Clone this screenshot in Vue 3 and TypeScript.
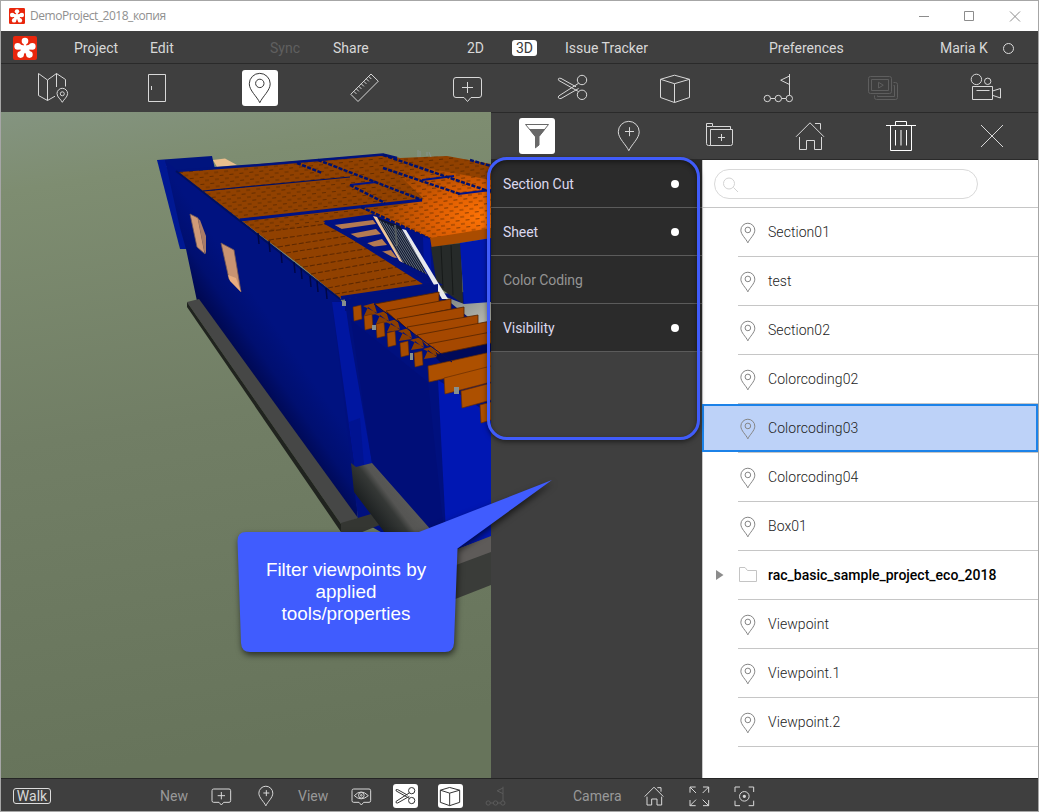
<script setup lang="ts">
import { h } from 'vue'

interface Glyph { d: string; fill?: string; soft?: string }

const circle = (x: number, y: number, r: number): string =>
  `M${x - r} ${y}a${r} ${r} 0 1 0 ${2 * r} 0a${r} ${r} 0 1 0 ${-2 * r} 0Z`

const pin = 'M17.8 32.7C15 26.5 7.3 20.5 7.3 13.8A10.4 10.4 0 0 1 28.2 13.8C28.2 20.5 20.5 26.5 17.8 32.7Z'
const bubble = 'M7 7.5H30A2.5 2.5 0 0 1 32.5 10V25A2.5 2.5 0 0 1 30 27.5H22L18.5 31.5L15 27.5H7A2.5 2.5 0 0 1 4.5 25V10A2.5 2.5 0 0 1 7 7.5Z'

const glyphs: Record<string, Glyph> = {
  map: {
    d: 'M30.5 16.5V9.5L21.5 3.5L12.5 10L3.5 3.5V25.5L12.5 30.5L20 26.2M12.5 10V30.5M21.5 3.5V17' +
      'M27.3 32.3C26 29.5 22 27 22 23.6A5.3 5.3 0 0 1 32.6 23.6C32.6 27 28.6 29.5 27.3 32.3Z' + circle(27.3, 23.8, 2),
  },
  door: { d: 'M9.5 4.5H26.5V31.5H9.5ZM12.5 16V20' },
  pin: { d: pin + circle(17.8, 13.4, 4.2) },
  ruler: {
    d: 'M25 4L32.3 11.2L12 31.5L4.8 24.3ZM7.8 21.3l2.6 2.6M10.3 18.8l2.6 2.6M12.8 16.3l2.6 2.6M15.3 13.8l2.6 2.6M17.8 11.3l2.6 2.6M20.3 8.8l2.6 2.6M22.7 6.4l2.6 2.6',
  },
  comment: { d: bubble + 'M18.5 12V23M13 17.5H24' },
  scissors: {
    d: circle(28, 10, 4.7) + circle(28, 24.8, 4.7) +
      'M24.6 21.6L4.7 10.4Q3.4 7.6 7 8.4L22 16.8M24.6 13.3L4.7 26Q3.4 29 7 28.5L24.6 18.5',
  },
  cube: { d: 'M17.5 5.2L32.5 9.3V27.5L17.5 32.5L3.5 27.5V9.3ZM3.5 9.3L17.5 13.7L32.5 9.3M17.5 13.7V32.5' },
  route: {
    d: circle(6.3, 28.5, 3.2) + circle(17.3, 28.5, 3.2) + circle(28.3, 28.5, 3.2) + 'M9.5 28.5H14M20.5 28.5H25M28.5 25.3V4M28.5 6L19.7 10.2L28.5 14.5',
  },
  slides: {
    d: 'M5.5 6.5H24.5A2 2 0 0 1 26.5 8.5V21.5A2 2 0 0 1 24.5 23.5H5.5A2 2 0 0 1 3.5 21.5V8.5A2 2 0 0 1 5.5 6.5ZM6.5 9.5H23.5V20.5H6.5ZM13.5 12.3L18.3 15.2L13.5 18ZM28.5 12.5H30.5A2 2 0 0 1 32.5 14.5V27.5A2 2 0 0 1 30.5 29.5H11.5A2 2 0 0 1 9.5 27.5V25.5M28.5 15.5H29.5V26.5H12.5V25.5',
  },
  camera: {
    d: circle(8.4, 9.4, 5.2) + circle(19.7, 11.3, 3.2) + 'M4.5 16.5H24.5V29.5H4.5ZM8.5 20.5H21.5M24.5 21L32.5 18.5V28L24.5 25.3',
  },
  filter: { d: 'M6.5 6.5H29.5L20 18.5V27L16.5 29.8V18.5Z', fill: 'M10 11H26.3L20 18.8V27L16 30V18.8Z' },
  addPin: { d: pin + 'M18.5 9.2V18.2M14 13.5H23' },
  addFolder: {
    d: 'M8.5 27.5H6.5A2 2 0 0 1 4.5 25.5V5.5H10.5V8.5H28.5V11.5M8.5 11.5H30.5V25.5A2 2 0 0 1 28.5 27.5H8.5ZM10 8.5H4.5M19.5 16V23M16 19.5H23M8.5 25.5V11.5',
  },
  home: { d: 'M4 18.8L18 4.8L32 18.8M7.5 19V31.5H14.5V22.5H22.5V31.5H29.5V19M23 5.5H28.5V11.5' },
  trash: { d: 'M3 7.5H33M12.5 7V3.5H23.5V7M7.5 8V32.5H28.5V8M12.5 12V27.5M23.5 12V27.5', soft: 'M18 12V27.5' },
  close: { d: 'M7 7L29 29M29 7L7 29' },
  eye: {
    d: bubble + 'M8 17.5Q18 6.5 29 17.5Q18 27 8 17.5Z' + circle(18.5, 17, 4.2) + circle(18.5, 17, 1.2),
  },
  expand: { d: 'M4.5 13V4.5H13M4.5 4.5L13.5 13.5M24 4.5H32.5V13M32.5 4.5L23.5 13.5M4.5 24V32.5H13M4.5 32.5L13.5 23.5M24 32.5H32.5V24M32.5 32.5L23.5 23.5' },
  target: { d: 'M4.5 12V4.5H12M25 4.5H32.5V12M4.5 25V32.5H12M25 32.5H32.5V25' + circle(18.5, 18.5, 7.2), fill: circle(18.5, 18.5, 2.5) },
}

const Icon = (props: { name: string; size: number }) => {
  const g = glyphs[props.name]
  const line = { fill: 'none', stroke: 'currentColor', 'vector-effect': 'non-scaling-stroke' }
  return h('svg', { width: props.size, height: props.size, viewBox: '0 0 36 36' }, [
    h('path', { ...line, d: g.d }),
    g.fill ? h('path', { d: g.fill, fill: 'currentColor' }) : null,
    g.soft ? h('path', { ...line, d: g.soft, 'stroke-width': 2, opacity: 0.5 }) : null,
  ])
}
Icon.props = ['name', 'size']

const petals = [[12, 5], [4.7, 10.4], [19.3, 10.4], [7.6, 18.6], [16.4, 18.6]]
const Logo = (props: { size: number }) =>
  h('svg', { width: props.size, height: props.size, viewBox: '0 0 24 24' }, [
    h('rect', { width: 24, height: 24, rx: 2, fill: '#e9260c' }),
    ...petals.slice(1).map(([x, y]) => h('path', { d: `M12 12.4L${x} ${y}`, stroke: '#fff', 'stroke-width': 5 })),
    h('path', { d: 'M12 12.4V5', stroke: '#fff', 'stroke-width': 2.6 }),
    ...petals.map(([x, y]) => h('circle', { cx: x, cy: y, r: 3.3, fill: '#fff' })),
  ])
Logo.props = ['size']

const tools = ['map', 'door', 'pin', 'ruler', 'comment', 'scissors', 'cube', 'route', 'slides', 'camera']
const panelTools = ['filter', 'addPin', 'addFolder', 'home', 'trash', 'close']

const filters = [
  { label: 'Section Cut', on: true },
  { label: 'Sheet', on: true },
  { label: 'Color Coding', on: false },
  { label: 'Visibility', on: true },
]

const viewpoints = [
  { name: 'Section01' }, { name: 'test' }, { name: 'Section02' }, { name: 'Colorcoding02' },
  { name: 'Colorcoding03', selected: true }, { name: 'Colorcoding04' }, { name: 'Box01' },
  { name: 'rac_basic_sample_project_eco_2018', folder: true },
  { name: 'Viewpoint' }, { name: 'Viewpoint.1' }, { name: 'Viewpoint.2' },
]

// Roof joists: left end, right end, plank depth.
const joists = [
  [375, 304, 439, 292, 10], [386, 311, 451, 299, 10], [397, 319, 464, 307, 11], [407, 327, 478, 315, 11],
  [417, 335, 491, 321, 12], [428, 344, 491, 332, 11],
].map(([x1, y1, x2, y2, d]) => `M${x1} ${y1}L${x2} ${y2}V${y2 + d}L${x1 + 10} ${y1 + d - 1}Z`)
const longJoists = [
  [428, 366, 491, 352, 16], [444, 378, 491, 366, 16], [461, 391, 491, 383, 17], [480, 405, 491, 402, 18],
].map(([x1, y1, x2, y2, d]) => `M${x1} ${y1}L${x2} ${y2}V${y2 + d}L${x1 + 1} ${y1 + d}Z`)
const stubs = [[353, 307], [364, 316], [376, 324], [387, 333], [400, 343], [414, 353]]
  .map(([x, y]) => `M${x} ${y}l8 -2l1 14l-8 2Z`)
const braces = [[363, 306], [375, 314], [386, 322], [398, 331], [410, 340], [423, 349]]
  .map(([x, y]) => `M${x} ${y}l11 -3l3 10ZM${x + 1} ${y + 10}l13 -2l-9 -7Z`)
const eaves = [[258, 233], [269, 241], [281, 252], [294, 262], [301, 268], [310, 276], [317, 281], [326, 288]]
const cableLines = Array.from({ length: 9 }, (_, i) => `M${377 + i * 3} ${219 + i * 1.4}L${404 + i * 3.2} ${263 + i * 1.6}`).join('')
</script>

<template>
  <div class="window">
    <header class="title">
      <Logo :size="16" />
      <span class="caption">DemoProject_2018_копия</span>
      <svg class="controls" width="110" height="20" viewBox="0 0 110 20">
        <path d="M4 10.500H14M49.500 5.500H58.500V14.500H49.500ZM95 5.500L105 15.500M105 5.500L95 15.500" fill="none" stroke="#8c8c8c" />
      </svg>
    </header>

    <nav class="menu">
      <Logo :size="24" />
      <span>Project</span><span>Edit</span><span class="dim">Sync</span><span>Share</span><span>2D</span>
      <span class="mode">3D</span><span>Issue Tracker</span><span>Preferences</span><span>Maria K</span>
      <i class="status"></i>
    </nav>

    <nav class="tools">
      <span v-for="t in tools" :key="t" class="tool" :class="{ active: t === 'pin', faded: t === 'slides' }"><Icon :name="t" :size="36" /></span>
    </nav>

    <main class="body">
      <svg class="scene" width="490" height="666" viewBox="1 112 490 666">
        <defs>
          <linearGradient id="ground" x1="0" y1="0" x2="0.12" y2="1">
            <stop offset="0" stop-color="#849480" /><stop offset=".12" stop-color="#7e8d71" />
            <stop offset=".5" stop-color="#717e65" /><stop offset="1" stop-color="#67745b" />
          </linearGradient>
          <linearGradient id="side" gradientUnits="userSpaceOnUse" x1="292" y1="350" x2="228" y2="394">
            <stop offset="0" stop-color="#001280" /><stop offset=".35" stop-color="#000f70" />
            <stop offset=".75" stop-color="#000541" /><stop offset="1" stop-color="#000648" />
          </linearGradient>
          <radialGradient id="roof" gradientUnits="userSpaceOnUse" cx="484" cy="217" r="115" gradientTransform="translate(0 98) scale(1 .55)">
            <stop offset="0" stop-color="#ff7406" /><stop offset=".45" stop-color="#dc5d02" /><stop offset="1" stop-color="#984400" />
          </radialGradient>
          <linearGradient id="beam" gradientUnits="userSpaceOnUse" x1="362" y1="505" x2="398" y2="478">
            <stop offset="0" stop-color="#1b1f20" /><stop offset=".45" stop-color="#353836" /><stop offset=".6" stop-color="#555553" /><stop offset="1" stop-color="#5c5c5a" />
          </linearGradient>
          <linearGradient id="floor" x1="0" y1="0" x2="1" y2="1">
            <stop offset="0" stop-color="#777f7c" /><stop offset="1" stop-color="#c5c5bb" />
          </linearGradient>
          <pattern id="shingle" width="10" height="7" patternUnits="userSpaceOnUse" patternTransform="rotate(-6)">
            <path d="M0 1.500H4M5 5H9" stroke="#4d2100" stroke-width="1" opacity=".65" />
          </pattern>
        </defs>
        <rect x="1" y="112" width="490" height="666" fill="url(#ground)" />

        <path d="M157 160L212 156L215 169L176 172Z" fill="#00147e" />
        <path d="M213 160L225 158.500L237 165L217 167Z" fill="#e9bd8c" />
        <path d="M157 160H165L190 249H180Z" fill="#001893" />
        <path d="M165 160L178 171L341 299L358 520L197 301L186 249L180 228Z" fill="url(#side)" />
        <path d="M190 214L198 218L205 254L197 247Z" fill="#d09a78" stroke="#755a58" stroke-width=".8" />
        <path d="M198 219L204 250L206 254V236L200 220Z" fill="#a97b67" />
        <path d="M221 243L234 250L241 292L229 279Z" fill="#c89372" stroke="#745753" stroke-width=".8" />
        <path d="M228 275L236 278L241 292L230 281Z" fill="#e9ad80" />

        <path d="M332 302L491 290V536L430 560L358 519Z" fill="#00107e" />
        <path d="M332 302H345L349 330L372 463L355 468Z" fill="#0016a1" />
        <path d="M351 320L428 382L447 560L372 463Z" fill="#000e78" />
        <path d="M438 380L491 415V537L447 552Z" fill="#0017b3" />
        <path d="M360 418L364 465L355 468L349 422Z" fill="#001391" />

        <path d="M187 302L199 299L358 518L341 524Z" fill="#464746" />
        <path d="M187 302L341 524V532L187 307Z" fill="#20231f" />
        <path d="M341 523L371 514L382 524L360 533H341Z" fill="#343632" />
        <path d="M351 463L356 467L372 463L432 531L407 550L385 533L354 492Z" fill="url(#beam)" />
        <path d="M440 556L491 536V553L440 572Z" fill="#5e5b59" />
        <path d="M440 571L491 552V585L440 605Z" fill="#3a3c39" />

        <path d="M176 171L383 154L400 158L447 156L491 164V232L430 240L373 215L325 222L437 284L340 298L300 265Z" fill="#914100" />
        <path d="M372 213L424 199L383 160L491 180V232L430 240Z" fill="url(#roof)" />
        <path d="M176 171L383 154L400 158L447 156L491 164V232L430 240L373 215L325 222L437 284L340 298L300 265Z" fill="url(#shingle)" />
        <path d="M262 233L325 222L437 284L340 298Z" fill="#914100" />
        <path d="M262 232L335 223M269 240L342 230M278 247L353 235M286 253L362 241M295 260L371 248M303 267L380 254M311 274L388 260M319 281L397 267M328 288L408 273M335 294L418 280"
          fill="none" stroke="#5f2900" stroke-width="1.100" stroke-dasharray="5 2" />
        <path d="M176 171L260 165L383 154.500L397 158" fill="none" stroke="#00137d" stroke-width="2.500" />
        <path d="M203 191L350 177" fill="none" stroke="#001064" stroke-width="1.200" />
        <path d="M240 220L422 200" fill="none" stroke="#001383" stroke-width="3" />
        <path d="M350 185L376 182M422 180L454 176M458 194L491 190" fill="none" stroke="#00148a" stroke-width="2" />
        <g fill="none" stroke="#00126e" stroke-width="2.500" stroke-dasharray="4 1.500">
          <path d="M297 163L322 173M318 160L422 200M383 155L491 192M350 185L385 203M383 168L460 194" />
          <path d="M470 160L491 166" /><path d="M361 207L428 238" />
        </g>
        <path d="M418 157V150M420 157V151M427 156V152M431 157L429 152" stroke="#87948d" />
        <path d="M176 171L300 268L340 299" fill="none" stroke="#00105f" stroke-width="2" />
        <path v-for="e in eaves" :key="e[0]" :d="`M${e[0]} ${e[1]}l1 11`" stroke="#000745" stroke-width="1.500" />
        <path d="M430 238L491 228V238L430 248Z" fill="#aa4c00" />

        <path d="M323 221L373 214L430 238L438 284L426 286Z" fill="#001183" />
        <path d="M334 225L373 220L376 224L341 229ZM350 234L376 229L381 234L356 238ZM364 244L382 239L387 245L371 247ZM380 252L391 250L397 258L389 257Z" fill="#b37a52" />
        <path d="M375 217L400 226L430 276L403 263Z" fill="#10172e" />
        <path :d="cableLines" stroke="#75818f" stroke-width=".8" />
        <path d="M395 225L397 246" stroke="#555c60" stroke-width="2" />
        <path d="M373 216L377 217L403 263L400 262Z" fill="#efc79a" />
        <path d="M423 237L430 239L432 280L424 270Z" fill="#0015a0" />
        <path d="M431 247L461 243L463 304L437 286Z" fill="#262a29" />
        <path d="M441 246L443 288M451 245L453 295" stroke="#171a19" />
        <path d="M460 243L491 238V304L464 304Z" fill="#0018b0" />
        <path d="M441 295L464 304L491 302V332L478 325Z" fill="url(#floor)" />
        <path d="M325 222L437 284L341 298" fill="none" stroke="#00117e" stroke-width="4" />
        <path d="M402 229L406 230L448 299L442 299Z" fill="#e8e9ec" />
        <path d="M438 284V297L345 311V299Z" fill="#00117c" />

        <path d="M428 350L491 340V356L444 366Z" fill="#000a59" />
        <path v-for="d in joists" :key="d" :d="d" fill="#a54800" stroke="#542400" stroke-width=".8" />
        <path v-for="d in longJoists" :key="d" :d="d" fill="#ad5000" stroke="#6a2e00" stroke-width=".7" />
        <path v-for="d in braces" :key="d" :d="d" fill="#8c3f00" />
        <path d="M374 304L452 362" stroke="#000b62" stroke-width="1" />
        <path v-for="d in stubs" :key="d" :d="d" fill="#a84c00" stroke="#632c00" stroke-width=".6" />
        <path d="M342 301h4v5h-4ZM372 325h4v5h-4ZM410 353h3v7h-3ZM454 387h5v7h-5Z" fill="#87908f" />
      </svg>

      <section class="side">
        <nav class="panel-tools">
          <span v-for="t in panelTools" :key="t" class="tool" :class="[t, { active: t === 'filter' }]"><Icon :name="t" :size="36" /></span>
        </nav>
        <div class="columns">
          <ul class="filters">
            <li v-for="f in filters" :key="f.label" :class="{ off: !f.on }">{{ f.label }}<i v-if="f.on"></i></li>
          </ul>
          <div class="views">
            <div class="search">
              <div class="field">
                <svg width="18" height="18" viewBox="0 0 18 18"><path d="M1.500 7.500a5.500 5.500 0 1 0 11 0a5.500 5.500 0 1 0 -11 0M11.500 11.500L16 16" fill="none" stroke="#d3d3d3" /></svg>
              </div>
            </div>
            <ul class="list">
              <li v-for="v in viewpoints" :key="v.name" :class="{ selected: v.selected, folder: v.folder }">
                <span class="arrow"><svg v-if="v.folder" width="8" height="10"><path d="M0 0L7.500 5L0 10Z" fill="#8c8c8c" /></svg></span>
                <span class="entry">
                  <svg v-if="v.folder" class="dir" width="20" height="17"><path d="M1.500 1.500H7L9.500 4.500H18.500V15.500H1.500Z" fill="none" stroke="#c4c4c4" /></svg>
                  <Icon v-else class="mark" name="pin" :size="24" />
                  <span class="name">{{ v.name }}</span>
                </span>
              </li>
            </ul>
          </div>
        </div>
      </section>
    </main>

    <footer class="bar">
      <span class="walk">Walk</span>
      <span class="group">New</span>
      <Icon name="comment" :size="24" />
      <Icon name="addPin" :size="24" />
      <span class="group">View</span>
      <Icon name="eye" :size="24" />
      <span class="chip"><Icon name="scissors" :size="24" /></span>
      <span class="chip"><Icon name="cube" :size="24" /></span>
      <Icon class="faint" name="route" :size="24" />
      <span class="group">Camera</span>
      <Icon name="home" :size="24" />
      <Icon name="expand" :size="24" />
      <Icon name="target" :size="24" />
    </footer>

    <div class="frame"></div>
    <div class="callout">
      <svg width="340" height="200" viewBox="225 470 340 200">
        <path d="M246 532H419L552 480L457.500 548.500L454 643Q453.500 652 445 652H250Q241.500 652 241 643L237.500 541Q237.500 532 246 532Z" fill="#405cfe" />
      </svg>
      <p>Filter viewpoints by<br />applied<br />tools/properties</p>
    </div>
  </div>
</template>

<style>
body { margin: 0; }
</style>

<style scoped>
.window {
  position: relative;
  box-sizing: border-box;
  width: 1039px;
  height: 812px;
  border: 1px solid #a6a6a6;
  overflow: hidden;
  display: flex;
  flex-direction: column;
  background: #3f3f3f;
  color: #d8d8d8;
  font: 14px/20px Roboto, sans-serif;
}
svg { display: block; }
ul { list-style: none; margin: 0; padding: 0; }
.title { height: 30px; flex: none; display: flex; align-items: center; background: #fff; padding: 0 13px 0 8px; }
.caption { margin-left: 5px; font: 12px/16px "Open Sans", sans-serif; letter-spacing: -0.47px; color: #8f8f8f; }
.controls { margin-left: auto; margin-top: -1px; }
.menu {
  height: 32px;
  flex: none;
  display: grid;
  grid-template-columns: 61px 76px 120px 63px 134px 45px 53px 204px 171px 63px 12px;
  align-items: center;
  padding: 2px 0 0 12px;
  box-sizing: border-box;
  white-space: nowrap;
}
.dim { color: #5f5f5f; }
.mode { width: 25px; height: 16px; border-radius: 3px; background: #fff; color: #3a3a3a; line-height: 17px; text-align: center; }
.status { width: 11px; height: 11px; border: 1px solid #dcdcdc; border-radius: 50%; box-sizing: border-box; }
.tools {
  height: 49px;
  flex: none;
  box-sizing: border-box;
  border-top: 1px solid #2a2a2a;
  display: grid;
  grid-template-columns: 104px 103px 104px 103px 105px 103px 104px 104px 103px 36px;
  padding: 6px 0 0 34px;
}
.tool { width: 36px; height: 36px; border-radius: 3px; }
.active { background: #fff; color: #383838; }
.faded { color: #5e5e5e; }
.body { height: 666px; flex: none; display: flex; }
.scene { flex: none; }
.side { flex: 1; display: flex; flex-direction: column; }
.panel-tools {
  height: 48px;
  flex: none;
  box-sizing: border-box;
  border-top: 1px solid #2a2a2a;
  border-bottom: 1px solid #2a2a2a;
  display: grid;
  grid-template-columns: 91px 92px 90px 91px 91px 36px;
  padding: 5px 0 0 28px;
}
.filter { color: #686868; }
.addPin svg { margin-left: 0.6px; }
.trash { color: #fff; }
.columns { flex: 1; display: flex; }
.filters { width: 211px; }
.filters li {
  height: 48px;
  box-sizing: border-box;
  display: flex;
  align-items: center;
  justify-content: space-between;
  padding: 1px 23px 0 12px;
  background: #2b2b2b;
  border-bottom: 1px solid #5b5b5b;
  color: #dbd8ee;
  letter-spacing: -0.08px;
}
.filters .off { color: #949494; }
.filters i { width: 8px; height: 8px; border-radius: 50%; background: #fff; }
.views { flex: 1; background: #fff; box-sizing: border-box; color: #222; box-shadow: inset 1px 0 #c9c9c9; }
.search { height: 48px; box-sizing: border-box; border-bottom: 1px solid #c6c6c6; padding: 9px 0 0 12px; }
.field { width: 264px; height: 30px; box-sizing: border-box; border: 1px solid #d9d9d9; border-radius: 15px; padding: 6px 0 0 7px; }
.list li { height: 49px; display: flex; }
.arrow { width: 36px; flex: none; display: flex; align-items: center; justify-content: center; }
.entry { flex: 1; height: 49px; box-sizing: border-box; border-bottom: 1px solid #c6c6c6; display: flex; align-items: center; }
.mark { color: #858585; margin: 1px 0 0 -2px; }
.name { margin-left: 8px; font-weight: 300; letter-spacing: 0.06px; }
.dir { margin-right: 2px; margin-top: -1px; }
.folder .arrow { padding-bottom: 2px; }
.folder .name { font-weight: 500; color: #000; letter-spacing: 0; }
.selected { position: relative; background: linear-gradient(#bdd2f8, #bdd2f8) no-repeat 0 0 / 100% 48px; }
.selected::after { content: ""; position: absolute; inset: 0 0 1px 0; border: 2px solid #1c82e8; }
.bar {
  height: 33px;
  flex: none;
  box-sizing: border-box;
  border-top: 1px solid #252525;
  display: grid;
  grid-template-columns: 147px 48.5px 45px 44.5px 50.500px 44.500px 45px 46px 89px 69px 45px 45px 24px;
  align-items: center;
  padding: 1px 0 0 12px;
}
.walk { width: 38px; height: 16px; box-sizing: border-box; border: 1px solid #dcdcdc; border-radius: 3px; line-height: 15px; text-align: center; }
.group { color: #999; }
.chip { width: 25px; height: 24px; border-radius: 3px; background: #fff; color: #333; }
.faint { color: #5b5b5b; }
.frame {
  position: absolute;
  left: 486px;
  top: 155.5px;
  width: 213px;
  height: 283px;
  box-sizing: border-box;
  border: 3px solid #405cfa;
  border-radius: 20px;
  box-shadow: 0 2px 5px rgba(0, 0, 0, 0.5), inset 0 2px 5px rgba(0, 0, 0, 0.45);
}
.callout { position: absolute; left: 224px; top: 469px; }
.callout svg { filter: drop-shadow(1px 3px 3px rgba(0, 0, 0, 0.6)); }
.callout p { position: absolute; left: 12px; top: 89px; width: 218px; margin: 0; text-align: center; color: #fff; font: 18.85px/22px "Liberation Sans", Arial, sans-serif; white-space: nowrap; }
</style>
